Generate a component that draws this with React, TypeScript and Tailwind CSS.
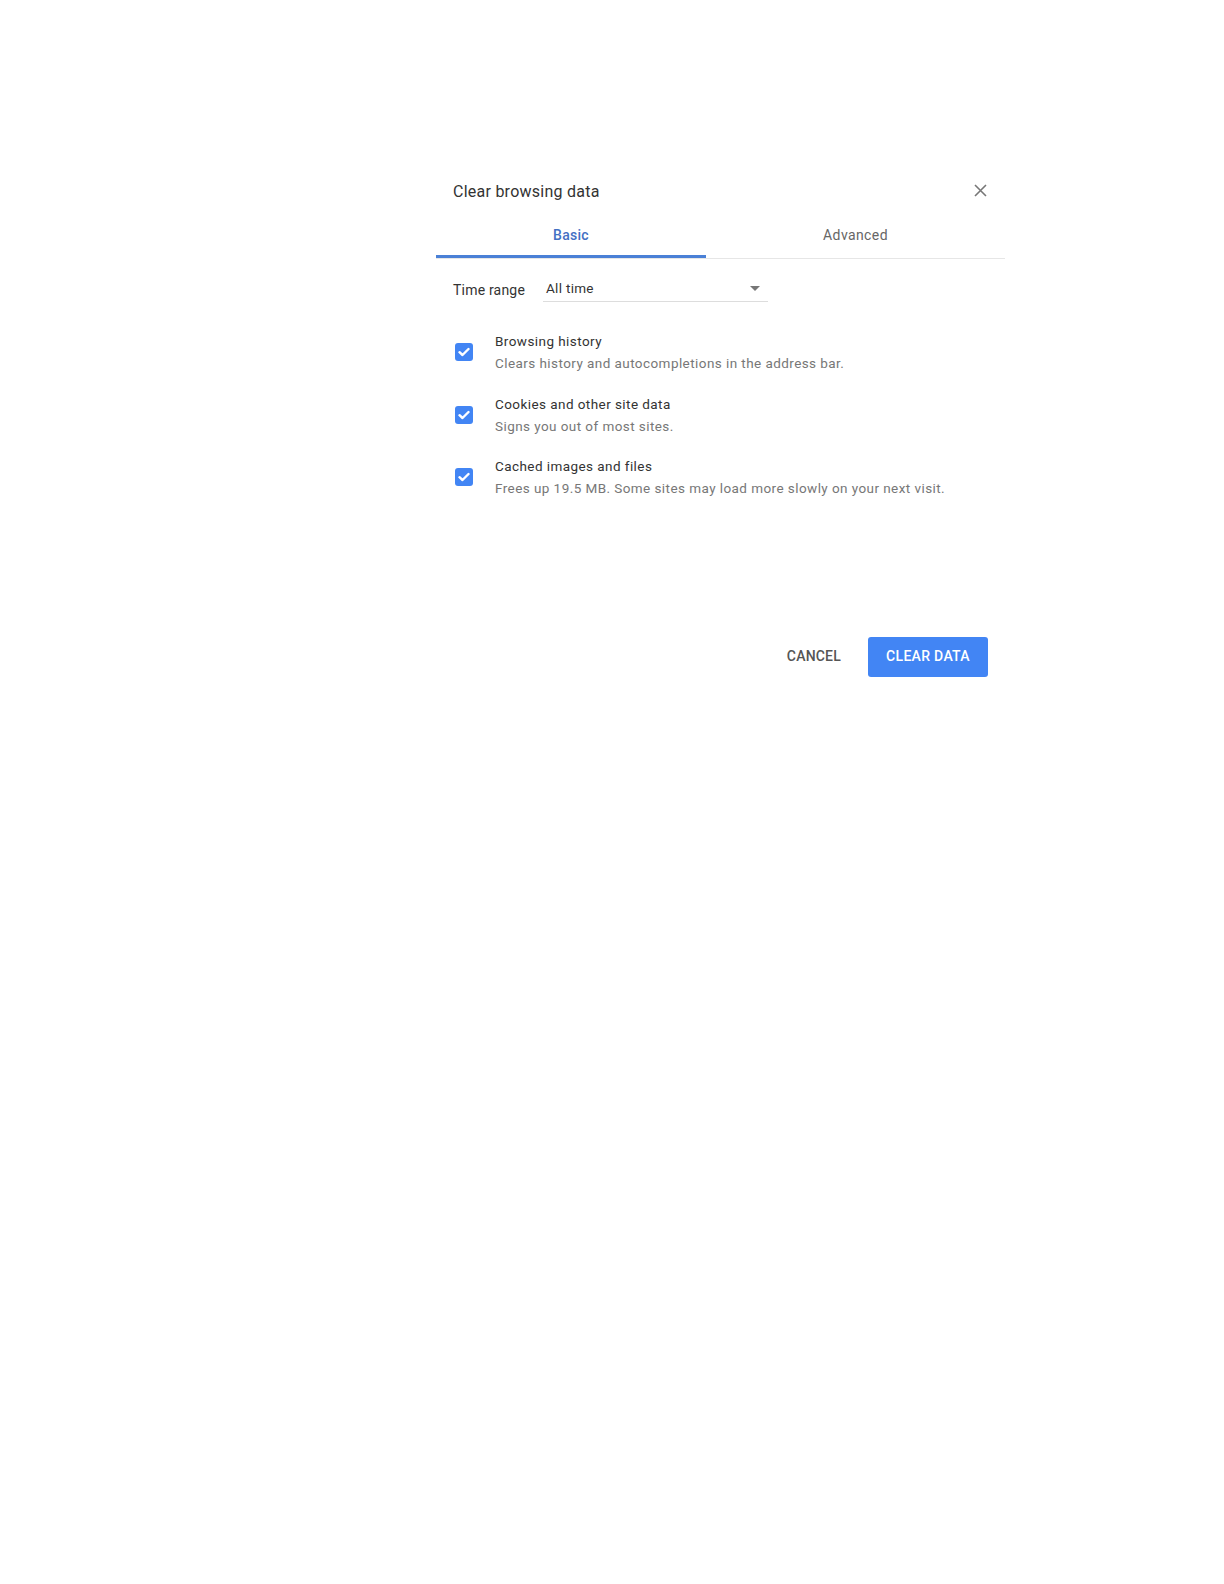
import React from "react";

function Check() {
  return (
    <div className="w-[18px] h-[18px] rounded-[3px] bg-[#4285f4] flex items-center justify-center shrink-0">
      <svg width="12" height="10" viewBox="0 0 12 10">
        <path d="M1.5 5.2 L4.5 8 L10.5 2" fill="none" stroke="white" strokeWidth="2.4" strokeLinecap="round" strokeLinejoin="round" />
      </svg>
    </div>
  );
}

const items = [
  { label: "Browsing history", desc: "Clears history and autocompletions in the address bar." },
  { label: "Cookies and other site data", desc: "Signs you out of most sites." },
  { label: "Cached images and files", desc: "Frees up 19.5 MB. Some sites may load more slowly on your next visit." },
];

export default function App() {
  return (
    <div className="w-full min-h-[1584px] bg-white pt-[177px]" style={{ fontFamily: "Roboto, 'Liberation Sans', sans-serif" }}>
      <div className="ml-[436px] w-[569px]">
        <div className="h-[30px] flex items-center justify-between pl-[17px] pr-[18px]">
          <span className="text-[16px] tracking-[0.25px] text-[#333333]">Clear browsing data</span>
          <svg width="13" height="13" viewBox="0 0 13 13" className="mb-[4px]">
            <path d="M1 1 L12 12 M12 1 L1 12" stroke="#777777" strokeWidth="1.6" />
          </svg>
        </div>
        <div className="h-[52px] flex border-b border-[#e6e6e6]">
          <div className="w-[270px] h-full flex flex-col">
            <div className="flex-1 pt-[8px] flex items-center justify-center text-[14px] tracking-[0.3px] font-medium text-[#4370c3]">Basic</div>
            <div className="h-[3px] bg-[#4a80d6]" />
          </div>
          <div className="flex-1 h-full flex flex-col">
            <div className="flex-1 pt-[8px] flex items-center justify-center text-[14px] tracking-[0.4px] text-[#666666]">Advanced</div>
            <div className="h-[3px]" />
          </div>
        </div>
        <div className="mt-[19px] h-[24px] flex items-center pl-[17px]">
          <span className="text-[14px] tracking-[0.2px] text-[#333333] w-[90px]">Time range</span>
          <div className="w-[225px] h-[24px] border-b border-[#dddddd] flex items-center justify-between pl-[3px] pr-[8px] pb-[2px]">
            <span className="text-[13.5px] tracking-[0.3px] text-[#333333]">All time</span>
            <svg width="10" height="5" viewBox="0 0 10 5">
              <path d="M0 0 L10 0 L5 5 Z" fill="#777777" />
            </svg>
          </div>
        </div>
        <div className="mt-[19px] flex flex-col">
          {items.map((it) => (
            <div key={it.label} className="h-[62.5px] flex items-center pl-[19px]">
              <Check />
              <div className="ml-[22px] flex flex-col">
                <span className="text-[13.5px] leading-[22px] tracking-[0.43px] text-[#333333]">{it.label}</span>
                <span className="text-[13.5px] leading-[22px] tracking-[0.43px] text-[#777777]">{it.desc}</span>
              </div>
            </div>
          ))}
        </div>
        <div className="mt-[128px] flex justify-end items-center pr-[17px]">
          <span className="text-[14px] font-medium tracking-[0.2px] text-[#555555] mr-[27px]">CANCEL</span>
          <div className="w-[120px] h-[40px] rounded-[3px] bg-[#4285f4] flex items-center justify-center text-[14px] font-medium tracking-[0.3px] text-white">CLEAR DATA</div>
        </div>
      </div>
    </div>
  );
}
